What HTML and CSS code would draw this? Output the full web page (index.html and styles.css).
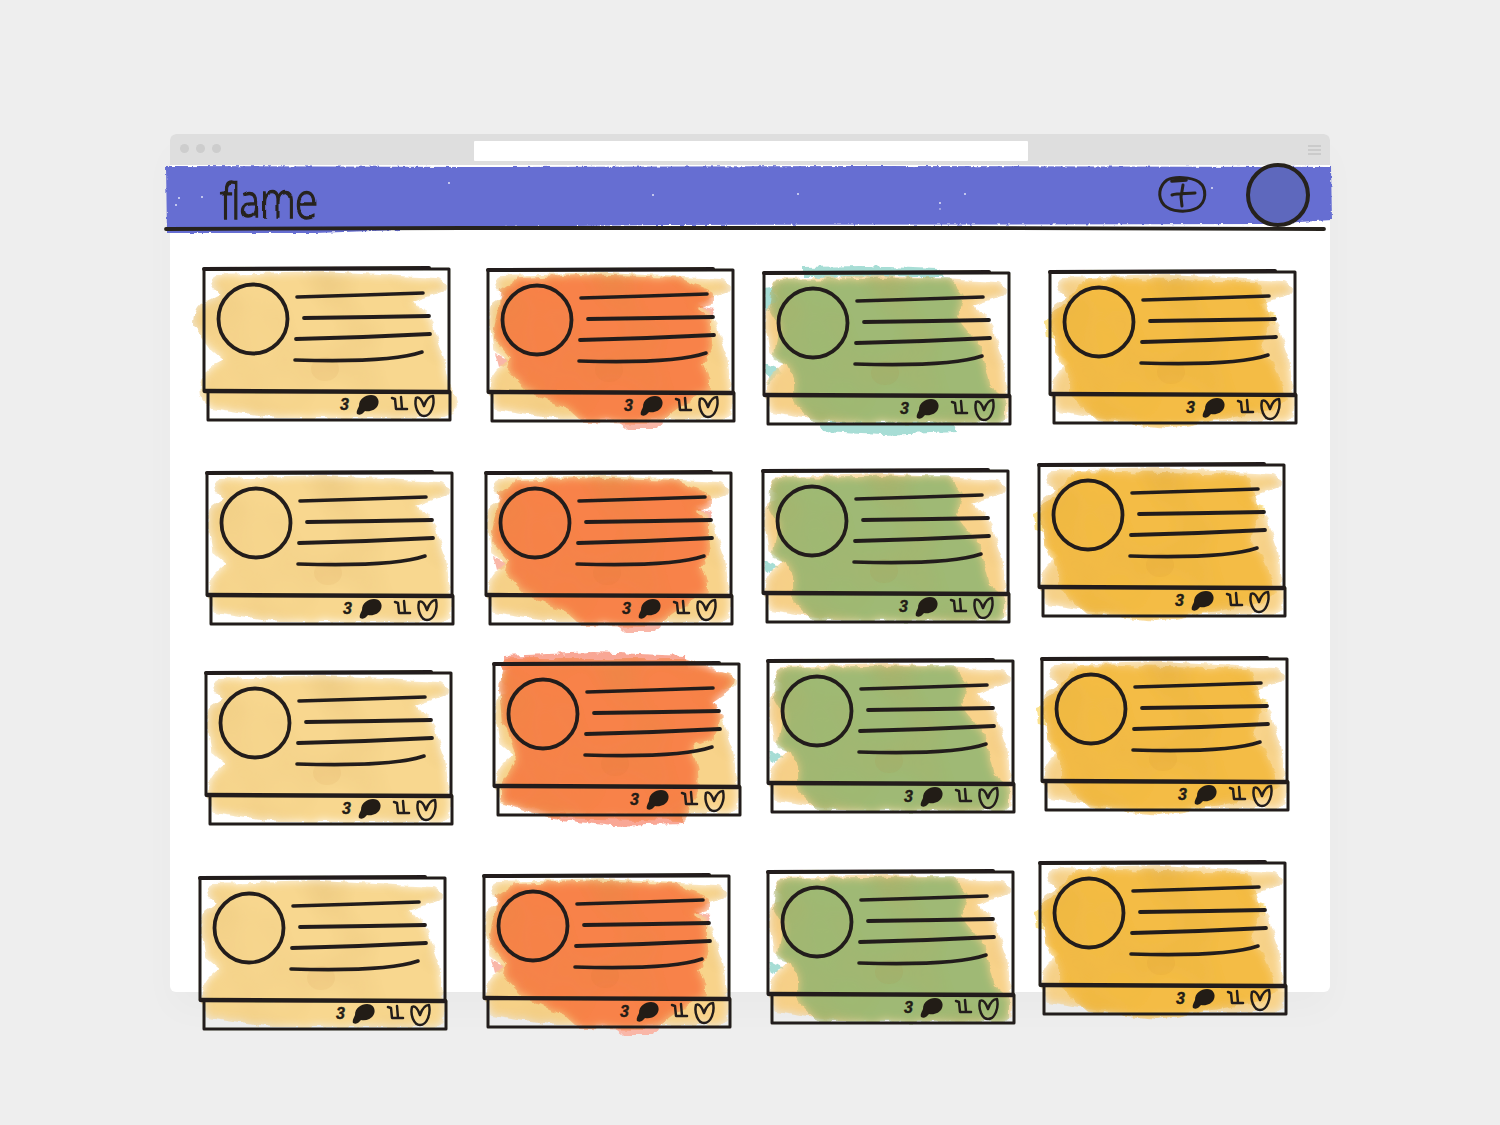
FILE: index.html
```html
<!DOCTYPE html>
<html lang="en">
<head>
<meta charset="utf-8">
<title>flame</title>
<link rel="stylesheet" href="styles.css">
</head>
<body>
<svg class="sprite" aria-hidden="true">
  <defs>
    <filter id="wash" x="-12%" y="-15%" width="124%" height="130%">
      <feTurbulence type="fractalNoise" baseFrequency="0.08" numOctaves="3" seed="7" result="n"/>
      <feDisplacementMap in="SourceGraphic" in2="n" scale="8" xChannelSelector="R" yChannelSelector="G" result="d"/>
      <feGaussianBlur in="d" stdDeviation="5" result="soft"/>
      <feComposite in="d" in2="soft" operator="in" result="faded"/>
      <feTurbulence type="fractalNoise" baseFrequency="0.012" numOctaves="2" seed="21"/>
      <feColorMatrix values="0 0 0 0 0.55  0 0 0 0 0.30  0 0 0 0 0.05  0.6 0 0 0 -0.24" result="tone"/>
      <feComposite in="tone" in2="d" operator="in" result="mottle"/>
      <feMerge result="m"><feMergeNode in="faded"/><feMergeNode in="mottle"/></feMerge>
      <feGaussianBlur in="m" stdDeviation="0.5"/>
    </filter>
    <filter id="halo" x="-12%" y="-25%" width="124%" height="150%">
      <feTurbulence type="fractalNoise" baseFrequency="0.12" numOctaves="3" seed="15" result="n"/>
      <feDisplacementMap in="SourceGraphic" in2="n" scale="7" xChannelSelector="R" yChannelSelector="G"/>
      <feGaussianBlur stdDeviation="0.5"/>
    </filter>
    <filter id="inkSoft" x="-5%" y="-5%" width="110%" height="110%">
      <feGaussianBlur stdDeviation="0.3"/>
    </filter>
    <filter id="headerEdge" x="-2%" y="-20%" width="104%" height="140%">
      <feTurbulence type="fractalNoise" baseFrequency="0.25" numOctaves="2" seed="3" result="n"/>
      <feDisplacementMap in="SourceGraphic" in2="n" scale="3" xChannelSelector="R" yChannelSelector="G"/>
      <feGaussianBlur stdDeviation="0.4"/>
    </filter>
    <filter id="hand" x="-10%" y="-10%" width="120%" height="120%">
      <feTurbulence type="fractalNoise" baseFrequency="0.04" numOctaves="2" seed="11" result="n"/>
      <feDisplacementMap in="SourceGraphic" in2="n" scale="4" xChannelSelector="R" yChannelSelector="G"/>
      <feGaussianBlur stdDeviation="0.3"/>
    </filter>

    <path id="shapeLightWide" stroke-width="4" stroke-linejoin="round" d="M12 9 L120 6 L235 12 Q245 18 238 22 L204 33 L218 42 Q228 52 232 70 L238 87 L245 117 L252 134 Q250 146 242 148 L74 148 L9 138 Q-4 130 -1 117 Q2 100 24 92 L9 80 L-8 57 Q-8 40 2 36 L20 27 Q6 16 12 9Z"/>
    <path id="shapeLight" stroke-width="4" stroke-linejoin="round" d="M12 9 L120 6 L235 12 Q245 18 238 22 L204 33 L218 42 Q228 52 232 70 L238 87 L242 117 L244 134 Q244 146 240 148 L74 148 L9 138 Q4 130 5 117 Q7 100 24 92 L9 80 L5 57 Q5 40 7 36 L20 27 Q6 16 12 9Z"/>
    <path id="shapeOrange" stroke-width="4" stroke-linejoin="round" d="M15 23 L33 11 L93 8 L193 11 L224 25 L224 33 L206 38 L221 49 L221 64 L224 78 L214 94 L221 112 L221 120 L193 136 L170 152 L96 151 L83 139 L43 122 L22 100 L25 88 L8 68 L14 40Z"/>
    <path id="shapeOrangeWide" stroke-width="4" stroke-linejoin="round" d="M12 -3 L190 -3 L238 14 L235 27 L217 39 L228 55 L218 73 L197 82 L203 109 L204 128 L188 156 L56 153 L9 137 L9 125 L26 95 L12 60 L9 25Z"/>
    <path id="shapeGreen" stroke-width="4" stroke-linejoin="round" d="M12 10 L185 8 L198 25 L192 45 L215 75 L218 88 L225 115 L240 128 L240 149 L52 149 L32 128 L32 105 L26 91 L12 86 L19 55 L9 38Z"/>
    <path id="shapeGold" stroke-width="4" stroke-linejoin="round" d="M39 9 L209 13 L219 46 L209 79 L223 93 L235 127 L222 138 L118 155 L50 148 L23 125 L23 107 L9 82 L4 46 L20 29Z"/>

    <g id="haloTeal" fill="#a7ddd5">
      <path d="M40 -5 L100 -6 L175 -3 L180 5 L40 6Z"/>
      <path d="M56 150 L190 150 L194 160 L120 163 L60 160Z"/>
      <path d="M2 16 L14 14 L12 36 L3 38Z"/>
      <path d="M2 92 L20 100 L5 112Z"/>
    </g>
    <g id="tealBits" fill="#a7ddd5">
      <path d="M190 40 L205 42 L200 47Z"/>
      <path d="M2 90 L16 98 L5 104Z"/>
    </g>
    <g id="pinkHalo" fill="#f9a795">
      <path d="M10 -7 L100 -11 L192 -7 L196 8 L10 6Z"/>
      <path d="M56 150 L188 150 L190 161 L120 163 L60 156Z"/>
    </g>
    <g id="pinkBits" fill="#f9b7a8">
      <path d="M200 36 L228 40 L224 55 Z"/>
      <path d="M8 84 L24 92 L12 100Z"/>
      <path d="M130 152 L175 152 L170 160 L140 160Z"/>
    </g>
    <g id="yellowBits" fill="#fbe28f">
      <path d="M218 40 L228 42 L226 55 L214 52Z"/>
      <path d="M-4 50 L6 46 L6 70 L-2 66Z"/>
    </g>

    <g id="ink">
      <ellipse cx="122" cy="101" rx="14" ry="12" fill="#b5651d" opacity=".06"/>
      <g filter="url(#inkSoft)">
        <g fill="none" stroke="#241f1a" stroke-linecap="round" stroke-linejoin="round">
          <path stroke-width="3" d="M1 1 L246 1 L246 123 M1 1 L1 123"/>
          <path stroke-width="4" d="M1 1 L226 0"/>
          <path stroke-width="3" d="M5 124 L5 152 L247 152 L247 124"/>
          <path stroke-width="4.4" d="M2 123 L246 124"/>
          <circle stroke-width="3.8" cx="50" cy="51" r="34.5"/>
          <path stroke-width="3.6" d="M94 29 L160 27 L220 25"/>
          <path stroke-width="3.8" d="M101 50 L170 49 L226 48"/>
          <path stroke-width="3.8" d="M93 71 L160 69 L227 66"/>
          <path stroke-width="3.6" d="M92 92 C125 93 190 94 219 84"/>
          <path stroke-width="2.5" d="M189 130 L192 131 L193 141 L204 141 M198 129 L199 141"/>
          <path stroke-width="2.5" d="M213 130 C216 128 219 132 221 138 C223 132 226 128 230 128 C232 137 228 148 221 148 C215 148 211 138 213 130Z"/>
        </g>
        <path fill="#221c16" d="M154 146 C153 143 155 141 156 138 C156 131 162 127 168 127 C174 127 177 132 175 137 C173 142 167 144 162 143 C160 145 158 148 154 146Z"/>
      </g>
    </g>

    <symbol id="cardPaleWide" viewBox="-20 -20 300 200">
      <use href="#shapeLightWide" fill="#f8d78f" stroke="#f8d78f" filter="url(#wash)"/>
      <use href="#ink"/>
    </symbol>
    <symbol id="cardPale" viewBox="-20 -20 300 200">
      <use href="#shapeLight" fill="#f8d78f" stroke="#f8d78f" filter="url(#wash)"/>
      <use href="#ink"/>
    </symbol>
    <symbol id="cardOrange" viewBox="-20 -20 300 200">
      <use href="#pinkBits" filter="url(#halo)"/>
      <use href="#shapeLight" fill="#f8d38a" stroke="#f8d38a" filter="url(#wash)"/>
      <use href="#shapeOrange" fill="#f8824a" stroke="#f8824a" filter="url(#wash)"/>
      <use href="#ink"/>
    </symbol>
    <symbol id="cardOrangeWide" viewBox="-20 -20 300 200">
      <use href="#pinkHalo" filter="url(#halo)"/>
      <use href="#shapeLight" fill="#f8d38a" stroke="#f8d38a" filter="url(#wash)"/>
      <use href="#shapeOrangeWide" fill="#f8824a" stroke="#f8824a" filter="url(#wash)"/>
      <use href="#ink"/>
    </symbol>
    <symbol id="cardGreen" viewBox="-20 -20 300 200">
      <use href="#tealBits" filter="url(#halo)"/>
      <use href="#shapeLight" fill="#f8d28a" stroke="#f8d28a" filter="url(#wash)"/>
      <use href="#shapeGreen" fill="#9fb974" stroke="#9fb974" filter="url(#wash)"/>
      <use href="#ink"/>
    </symbol>
    <symbol id="cardGreenHalo" viewBox="-20 -20 300 200">
      <use href="#haloTeal" filter="url(#halo)"/>
      <use href="#shapeLight" fill="#f8d28a" stroke="#f8d28a" filter="url(#wash)"/>
      <use href="#shapeGreen" fill="#9fb974" stroke="#9fb974" filter="url(#wash)"/>
      <use href="#ink"/>
    </symbol>
    <symbol id="cardGold" viewBox="-20 -20 300 200">
      <use href="#yellowBits" filter="url(#halo)"/>
      <use href="#shapeLight" fill="#f8d38a" stroke="#f8d38a" filter="url(#wash)"/>
      <use href="#shapeGold" fill="#f4bc45" stroke="#f4bc45" filter="url(#wash)"/>
      <use href="#ink"/>
    </symbol>
  </defs>
</svg>

<main class="window">
  <div class="chrome">
    <div class="dots"><i class="dot"></i><i class="dot"></i><i class="dot"></i></div>
    <div class="address"></div>
    <div class="menu"><i class="menu-bar"></i><i class="menu-bar"></i><i class="menu-bar"></i></div>
  </div>

  <header class="appbar">
    <svg class="appbar-art" viewBox="0 0 1167 68" width="1167" height="68">
      <path fill="#666ed2" filter="url(#headerEdge)" d="M1 1 L300 2 L700 1 L1166 2 L1167 55 L1100 59 L500 60 L320 62 L150 68 L2 68Z"/>
      <g fill="#fff" opacity=".8">
        <circle cx="14" cy="33" r="1"/><circle cx="37" cy="32" r="1"/><circle cx="11" cy="40" r="1"/><circle cx="284" cy="18" r="1"/><circle cx="488" cy="30" r="1"/><circle cx="633" cy="29" r="1"/><circle cx="775" cy="38" r="1"/><circle cx="800" cy="29" r="1"/><circle cx="775" cy="44" r=".8"/><circle cx="1047" cy="23" r="1"/><circle cx="1111" cy="24" r="1"/>
      </g>
      <path fill="none" stroke="#26221c" stroke-width="3.8" stroke-linecap="round" d="M1 64 L300 63 L800 63 L1159 64"/>
      <g filter="url(#hand)">
        <text class="logo" transform="translate(55 53) scale(0.86 1)">flame</text>
      </g>
      <g fill="none" stroke="#26221c" stroke-linecap="round" stroke-width="3">
        <path d="M1002 15 C1010 11 1026 12 1034 17 C1042 23 1042 37 1032 43 C1022 48 1006 47 999 40 C992 32 994 21 1002 15Z"/>
        <path d="M1007 16 L1021 15" stroke-width="3.6"/>
        <path d="M1018 20 L1016 32 L1017 41 M1007 30 C1013 28 1022 29 1030 28"/>
      </g>
      <circle cx="1113" cy="30" r="30" fill="#5e68bd" stroke="#26221c" stroke-width="4"/>
    </svg>
  </header>

  <section class="board">
    <article class="card c1"><svg class="art"><use href="#cardPaleWide"/></svg><span class="count">3</span></article>
    <article class="card c2"><svg class="art"><use href="#cardOrange"/></svg><span class="count">3</span></article>
    <article class="card c3"><svg class="art"><use href="#cardGreenHalo"/></svg><span class="count">3</span></article>
    <article class="card c4"><svg class="art"><use href="#cardGold"/></svg><span class="count">3</span></article>
    <article class="card c5"><svg class="art"><use href="#cardPale"/></svg><span class="count">3</span></article>
    <article class="card c6"><svg class="art"><use href="#cardOrange"/></svg><span class="count">3</span></article>
    <article class="card c7"><svg class="art"><use href="#cardGreen"/></svg><span class="count">3</span></article>
    <article class="card c8"><svg class="art"><use href="#cardGold"/></svg><span class="count">3</span></article>
    <article class="card c9"><svg class="art"><use href="#cardPale"/></svg><span class="count">3</span></article>
    <article class="card c10"><svg class="art"><use href="#cardOrangeWide"/></svg><span class="count">3</span></article>
    <article class="card c11"><svg class="art"><use href="#cardGreen"/></svg><span class="count">3</span></article>
    <article class="card c12"><svg class="art"><use href="#cardGold"/></svg><span class="count">3</span></article>
    <article class="card c13"><svg class="art"><use href="#cardPale"/></svg><span class="count">3</span></article>
    <article class="card c14"><svg class="art"><use href="#cardOrange"/></svg><span class="count">3</span></article>
    <article class="card c15"><svg class="art"><use href="#cardGreen"/></svg><span class="count">3</span></article>
    <article class="card c16"><svg class="art"><use href="#cardGold"/></svg><span class="count">3</span></article>
  </section>
</main>
</body>
</html>
```
FILE: styles.css
```css
html, body {
  margin: 0;
  background: #eeeeee;
}

body {
  width: 1500px;
  height: 1125px;
  overflow: hidden;
  padding-top: 134px;
  box-sizing: border-box;
  font-family: "Liberation Sans", Arial, sans-serif;
}

.sprite {
  position: absolute;
  width: 0;
  height: 0;
}

.window {
  width: 1160px;
  height: 858px;
  margin: 0 auto;
  display: flex;
  flex-direction: column;
  background: #fff;
  border-radius: 6px;
  box-shadow: 0 18px 36px rgba(0, 0, 0, 0.025);
}

.chrome {
  flex: 0 0 31px;
  display: grid;
  grid-template-columns: 1fr 554px 1fr;
  align-items: start;
  padding: 7px 9px 0 10px;
  box-sizing: border-box;
  background: #dedede;
  border-radius: 6px 6px 0 0;
}

.dots {
  display: flex;
  gap: 7px;
  padding-top: 3px;
}

.dot {
  display: block;
  width: 9px;
  height: 9px;
  border-radius: 50%;
  background: #cdcdcd;
}

.address {
  height: 20px;
  background: #fff;
  border-radius: 1px;
}

.menu {
  display: flex;
  flex-direction: column;
  gap: 2px;
  padding-top: 4px;
  width: 13px;
  justify-self: end;
}

.menu-bar {
  display: block;
  height: 2px;
  background: #cbcbcb;
}

.appbar {
  flex: 0 0 68px;
  margin: 0 -3px 0 -5px;
  position: relative;
}

.appbar-art {
  display: block;
  overflow: visible;
}

.logo {
  font-family: "Open Sans", sans-serif;
  font-weight: 300;
  font-size: 47px;
  letter-spacing: -1px;
  fill: #26221c;
  stroke: #26221c;
  stroke-width: 1.3px;
}

.board {
  flex: 1;
  position: relative;
}

.card {
  position: absolute;
  width: 300px;
  height: 200px;
  margin: -20px 0 0 -20px;
}

.art {
  display: block;
  width: 300px;
  height: 200px;
  overflow: visible;
}

.count {
  position: absolute;
  left: 157px;
  top: 148px;
  font-size: 16px;
  line-height: 18px;
  font-weight: 700;
  font-style: italic;
  color: #221c16;
  -webkit-text-stroke: 0.4px #221c16;
}

.c1 { left: 33px; top: 35px; }
.c2 { left: 317px; top: 36px; }
.c3 { left: 593px; top: 39px; }
.c4 { left: 879px; top: 38px; }
.c5 { left: 36px; top: 239px; }
.c6 { left: 315px; top: 239px; }
.c7 { left: 592px; top: 237px; }
.c8 { left: 868px; top: 231px; }
.c9 { left: 35px; top: 439px; }
.c10 { left: 323px; top: 430px; }
.c11 { left: 597px; top: 427px; }
.c12 { left: 871px; top: 425px; }
.c13 { left: 29px; top: 644px; }
.c14 { left: 313px; top: 642px; }
.c15 { left: 597px; top: 638px; }
.c16 { left: 869px; top: 629px; }
```
